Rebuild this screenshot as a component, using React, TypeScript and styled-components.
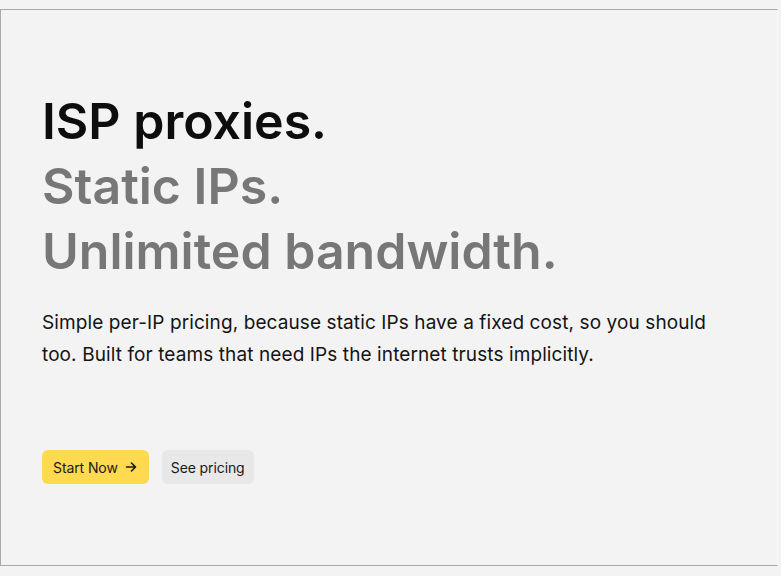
import React from 'react';
import styled, { createGlobalStyle } from 'styled-components';

const GlobalStyle = createGlobalStyle`
  html, body {
    margin: 0;
    padding: 0;
    background: #f3f3f3;
    font-family: Inter, 'Liberation Sans', sans-serif;
    -webkit-font-smoothing: antialiased;
  }
`;

const Page = styled.div`
  padding-top: 9px;
  padding-bottom: 10px;
`;

const Hero = styled.section`
  height: 557px;
  box-sizing: border-box;
  border-top: 1px solid #a9a9a9;
  border-bottom: 1px solid #a9a9a9;
  border-left: 1px solid #a9a9a9;
  border-right: 1px solid #f9f9f9;
  margin-right: 3px;
  padding: 79px 0 0 41px;
  display: flex;
  flex-direction: column;
`;

const Title = styled.h1`
  margin: 0;
  font-size: 50px;
  line-height: 65px;
  font-weight: 600;
  letter-spacing: 0;
`;

const Line = styled.span<{ muted?: boolean }>`
  display: block;
  color: ${({ muted }) => (muted ? '#777777' : '#0d0d0d')};
`;

const Lead = styled.p`
  margin: 23px 0 0;
  max-width: 702px;
  font-size: 19px;
  line-height: 32px;
  color: #141414;
  letter-spacing: 0.1px;
`;

const Actions = styled.div`
  display: flex;
  gap: 13px;
  margin-top: 79px;
`;

const Button = styled.button<{ primary?: boolean }>`
  display: inline-flex;
  align-items: center;
  gap: 7px;
  height: 34px;
  padding: ${({ primary }) => (primary ? '0 12px 0 11px' : '0 9px')};
  border: none;
  border-radius: 6px;
  font-family: inherit;
  font-size: 14px;
  letter-spacing: -0.1px;
  color: #1a1a1a;
  background: ${({ primary }) => (primary ? '#ffd94f' : '#e8e8e8')};
  cursor: pointer;
`;

const Arrow = () => (
  <svg width="12" height="12" viewBox="0 0 12 12" fill="none" stroke="#1a1a1a" strokeWidth="1.6" strokeLinecap="round" strokeLinejoin="round">
    <path d="M1.5 6h9M6.5 2l4 4-4 4" />
  </svg>
);

export default function App() {
  return (
    <>
      <GlobalStyle />
      <Page>
        <Hero>
          <Title>
            <Line>ISP proxies.</Line>
            <Line muted>Static IPs.</Line>
            <Line muted>Unlimited bandwidth.</Line>
          </Title>
          <Lead>
            Simple per-IP pricing, because static IPs have a fixed cost, so you should too. Built for teams that need IPs
            the internet trusts implicitly.
          </Lead>
          <Actions>
            <Button primary>
              Start Now <Arrow />
            </Button>
            <Button>See pricing</Button>
          </Actions>
        </Hero>
      </Page>
    </>
  );
}
